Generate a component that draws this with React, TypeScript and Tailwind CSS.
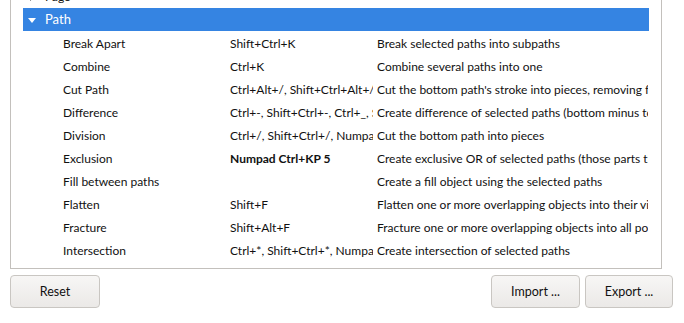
import React from "react";

type Row = { name: string; keys: string; desc: string; bold?: boolean };

const rows: Row[] = [
  { name: "Break Apart", keys: "Shift+Ctrl+K", desc: "Break selected paths into subpaths" },
  { name: "Combine", keys: "Ctrl+K", desc: "Combine several paths into one" },
  {
    name: "Cut Path",
    keys: "Ctrl+Alt+/, Shift+Ctrl+Alt+/",
    desc: "Cut the bottom path's stroke into pieces, removing fill",
  },
  {
    name: "Difference",
    keys: "Ctrl+-, Shift+Ctrl+-, Ctrl+_, Shift+Ctrl+_",
    desc: "Create difference of selected paths (bottom minus top)",
  },
  {
    name: "Division",
    keys: "Ctrl+/, Shift+Ctrl+/, Numpad Ctrl+/",
    desc: "Cut the bottom path into pieces",
  },
  {
    name: "Exclusion",
    keys: "Numpad Ctrl+KP 5",
    desc: "Create exclusive OR of selected paths (those parts that belong to only one path)",
    bold: true,
  },
  { name: "Fill between paths", keys: "", desc: "Create a fill object using the selected paths" },
  { name: "Flatten", keys: "Shift+F", desc: "Flatten one or more overlapping objects into their visible parts" },
  { name: "Fracture", keys: "Shift+Alt+F", desc: "Fracture one or more overlapping objects into all possible segments" },
  {
    name: "Intersection",
    keys: "Ctrl+*, Shift+Ctrl+*, Numpad Ctrl+*",
    desc: "Create intersection of selected paths",
  },
];

function Button({ label, width }: { label: string; width: string }) {
  return (
    <button
      className={`${width} h-[33px] pt-[1px] rounded-[4px] border border-[#c9c6c2] bg-gradient-to-b from-[#f7f6f5] to-[#ebe9e7] text-[12.5px] text-[#111]`}
    >
      {label}
    </button>
  );
}

export default function App() {
  return (
    <div
      className="w-[684px] h-[323px] overflow-hidden bg-white text-[12px] text-[#111]"
      style={{ fontFamily: 'Lato, "Open Sans", sans-serif' }}
    >
      {/* tree panel, top scrolled out of view */}
      <div className="ml-[10px] mt-[-16px] w-[652px] h-[285px] border border-[#c3c0bc] bg-white">
        {/* Page row (collapsed) */}
        <div className="h-[23px] ml-[12px] pt-[1px] flex items-center">
          <span className="ml-[7px] w-0 h-0 border-y-[4px] border-y-transparent border-l-[5px] border-l-[#555]" />
          <span className="ml-[10px]">Page</span>
        </div>

        {/* Path row (expanded, selected) */}
        <div className="h-[23px] ml-[12px] w-[626px] pt-[1px] flex items-center bg-[#3584e2] text-white">
          <span className="ml-[5px] w-0 h-0 border-x-[4px] border-x-transparent border-t-[5px] border-t-white" />
          <span className="ml-[9px] text-[13px]">Path</span>
        </div>

        {rows.map((r) => (
          <div key={r.name} className="h-[23px] ml-[12px] w-[626px] pt-[2px] flex items-center whitespace-nowrap">
            <div className="w-[203px] shrink-0 pl-[40px] overflow-hidden">{r.name}</div>
            <div className={`w-[147px] shrink-0 pl-[4px] overflow-hidden ${r.bold ? "font-bold" : ""}`}>{r.keys}</div>
            <div className="w-[275px] shrink-0 pl-[4px] overflow-hidden">{r.desc}</div>
          </div>
        ))}
      </div>

      <div className="mt-[6px] px-[10px] flex items-center">
        <Button label="Reset" width="w-[90px]" />
        <div className="flex-1" />
        <div className="flex gap-[5px] mr-[1px]">
          <Button label="Import ..." width="w-[89px]" />
          <Button label="Export ..." width="w-[88px]" />
        </div>
      </div>
    </div>
  );
}
